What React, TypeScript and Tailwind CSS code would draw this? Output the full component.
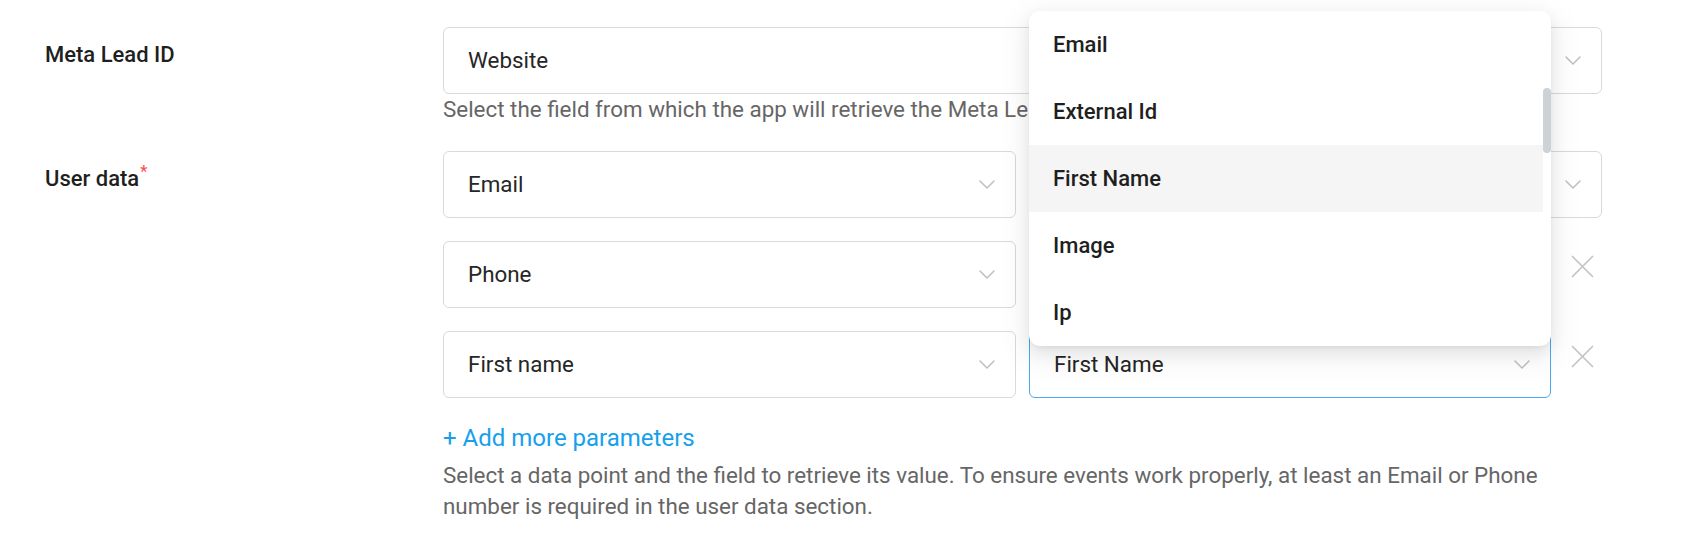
import React from "react";

const Chevron = () => (
    <svg width="16" height="9" viewBox="0 0 16 9" fill="none" className="shrink-0">
        <path d="M1 1l7 7 7-7" stroke="#bfbfbf" strokeWidth={1.5} strokeLinecap="round" strokeLinejoin="round" />
    </svg>
);

const Cross = () => (
    <svg width="23" height="23" viewBox="0 0 23 23" fill="none">
        <path d="M1.5 1.5l20 20M21.5 1.5l-20 20" stroke="#c4c4c4" strokeWidth={1.7} strokeLinecap="round" />
    </svg>
);

interface SelectProps {
    value: string;
    focused?: boolean;
    className?: string;
}

const Select = ({ value, focused = false, className = "" }: SelectProps) => (
    <div
        className={`h-[67px] flex items-center justify-between pl-[24px] pr-[20px] rounded-[6px] border bg-white ${
            focused ? "border-[#4aa8f0]" : "border-[#d9d9d9]"
        } ${className}`}
    >
        <span className="text-[22.4px] text-[#262626]">{value}</span>
        <Chevron />
    </div>
);

const rows = [
    { key: "Email", field: "", removable: false },
    { key: "Phone", field: "", removable: true },
    { key: "First name", field: "First Name", removable: true },
];

const options = ["Email", "External Id", "First Name", "Image", "Ip"];

export default function App() {
    return (
        <div className="relative w-[1708px] h-[550px] bg-white font-['Roboto',sans-serif] overflow-hidden">
            <div className="pt-[27px] pl-[45px] pr-[106px]">
                {/* Meta Lead ID */}
                <div className="flex">
                    <div className="w-[398px] pt-[12px] text-[22px] leading-[31px] font-medium text-[#1f1f1f]">
                        Meta Lead ID
                    </div>
                    <div className="flex-1">
                        <Select value="Website" />
                        <p className="text-[22.4px] leading-[31px] text-[#666666]">
                            Select the field from which the app will retrieve the Meta Lead ID.
                        </p>
                    </div>
                </div>

                {/* User data */}
                <div className="flex mt-[26px]">
                    <div className="w-[398px] pt-[12px] text-[22px] leading-[31px] font-medium text-[#1f1f1f]">
                        User data
                        <span className="relative -top-[9px] ml-[1px] text-[16px] text-[#ff4d4f]">*</span>
                    </div>
                    <div className="flex-1">
                        <div className="flex flex-col gap-[23px]">
                            {rows.map((row) => (
                                <div key={row.key} className="flex">
                                    <Select value={row.key} className="w-[573px]" />
                                    <Select
                                        value={row.field}
                                        focused={row.field !== ""}
                                        className="flex-1 ml-[13px]"
                                    />
                                    {row.removable && (
                                        <div className="ml-[20px] mr-[8px] mt-[14px] self-start">
                                            <Cross />
                                        </div>
                                    )}
                                </div>
                            ))}
                        </div>
                        <div className="mt-[23px] text-[24px] leading-[34px] text-[#16a0ec]">+ Add more parameters</div>
                        <p className="mt-[5px] max-w-[1130px] text-[22.4px] leading-[31px] text-[#666666]">
                            Select a data point and the field to retrieve its value. To ensure events work properly, at least an Email or Phone number is required in the user data section.
                        </p>
                    </div>
                </div>
            </div>

            {/* Open dropdown for the last row */}
            <div className="absolute left-[1029px] top-[11px] w-[522px] h-[335px] bg-white rounded-[11px] overflow-hidden shadow-[0_6px_16px_0_rgba(0,0,0,0.08),0_3px_6px_-4px_rgba(0,0,0,0.12),0_9px_28px_8px_rgba(0,0,0,0.05)]">
                {options.map((opt) => (
                    <div
                        key={opt}
                        className={`h-[67px] mr-[8px] flex items-center pl-[24px] text-[22px] font-medium text-[#1f1f1f] ${
                            opt === "First Name" ? "bg-[#f5f5f5]" : ""
                        }`}
                    >
                        {opt}
                    </div>
                ))}
                <div className="absolute right-0 top-[77px] w-[8px] h-[65px] rounded-full bg-[#cdd2d7]" />
            </div>
        </div>
    );
}
